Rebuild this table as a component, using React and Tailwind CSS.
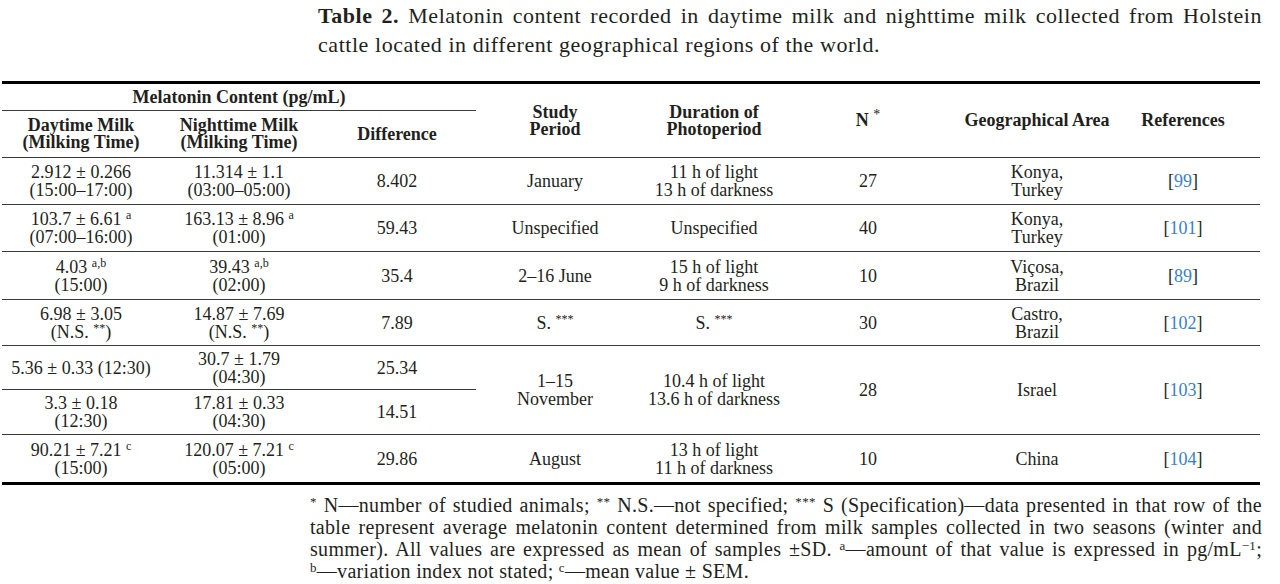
import React from 'react';
import clsx from 'clsx';

const rule = 'border-b border-[#3a3a3a]';

function Cell({ children, className, last }) {
    return (
        <div className={clsx('flex flex-col items-center justify-center text-center', !last && rule, className)}>
            {children}
        </div>
    );
}

function Head({ children, className }) {
    return (
        <Cell className={clsx('font-bold text-[18px] leading-[17px]', className)}>
            {children}
        </Cell>
    );
}

function Ref({ n, last, className }) {
    return (
        <Cell last={last} className={clsx('pr-[26px]', className)}>
            <span>[<span className="text-[#3b7fc4]">{n}</span>]</span>
        </Cell>
    );
}

const Sup = ({ children, className }) => <sup className={clsx('text-[12px] leading-none', className)}>{children}</sup>;

const rows = [
    {
        day: ['2.912 ± 0.266', '(15:00–17:00)'],
        night: ['11.314 ± 1.1', '(03:00–05:00)'],
        diff: '8.402', period: ['January'], photo: ['11 h of light', '13 h of darkness'],
        n: '27', area: ['Konya,', 'Turkey'], ref: '99',
    },
    {
        day: [<>103.7 ± 6.61 <Sup>a</Sup></>, '(07:00–16:00)'],
        night: [<>163.13 ± 8.96 <Sup>a</Sup></>, '(01:00)'],
        diff: '59.43', period: ['Unspecified'], photo: ['Unspecified'],
        n: '40', area: ['Konya,', 'Turkey'], ref: '101',
    },
    {
        day: [<>4.03 <Sup>a,b</Sup></>, '(15:00)'],
        night: [<>39.43 <Sup>a,b</Sup></>, '(02:00)'],
        diff: '35.4', period: ['2–16 June'], photo: ['15 h of light', '9 h of darkness'],
        n: '10', area: ['Viçosa,', 'Brazil'], ref: '89',
    },
    {
        day: ['6.98 ± 3.05', <>(N.S. <Sup>**</Sup>)</>],
        night: ['14.87 ± 7.69', <>(N.S. <Sup>**</Sup>)</>],
        diff: '7.89', period: [<>S. <Sup>***</Sup></>], photo: [<>S. <Sup>***</Sup></>],
        n: '30', area: ['Castro,', 'Brazil'], ref: '102',
    },
];

const lines = (arr) => arr.map((l, i) => <span key={i} className="block">{l}</span>);

export default function App() {
    return (
        <div className="w-[1280px] h-[584px] overflow-hidden bg-white text-[#231f20] font-['Liberation_Serif',serif]">
            {/* Caption */}
            <div className="pl-[318px] pr-[18px] pt-[1px] text-[22px] leading-[29px] tracking-[0.55px]">
                <p className="text-justify [text-align-last:justify]">
                    <b>Table 2.</b> Melatonin content recorded in daytime milk and nighttime milk collected from Holstein
                </p>
                <p>cattle located in different geographical regions of the world.</p>
            </div>

            {/* Table */}
            <div className="ml-[2px] mt-[22px] w-[1258px] border-y-[3px] border-black">
                <div className="grid grid-cols-[158px_158px_158px_158px_160px_148px_190px_128px] grid-rows-[27px_47px_47px_47px_48px_46px_44px_45px_47px] text-[18px] leading-[18px]">
                    <Head className="col-span-3 pt-[1px]">Melatonin Content (pg/mL)</Head>
                    <Head className="row-span-2">Study<br />Period</Head>
                    <Head className="row-span-2">Duration of<br />Photoperiod</Head>
                    <Head className="row-span-2">
                        <span>N <Sup className="text-[14px] font-normal">*</Sup></span>
                    </Head>
                    <Head className="row-span-2">Geographical Area</Head>
                    <Head className="row-span-2 pr-[26px]">References</Head>

                    <Head>Daytime Milk<br />(Milking Time)</Head>
                    <Head>Nighttime Milk<br />(Milking Time)</Head>
                    <Head>Difference</Head>

                    {rows.map((r, i) => (
                        <React.Fragment key={i}>
                            <Cell>{lines(r.day)}</Cell>
                            <Cell>{lines(r.night)}</Cell>
                            <Cell>{r.diff}</Cell>
                            <Cell>{lines(r.period)}</Cell>
                            <Cell>{lines(r.photo)}</Cell>
                            <Cell>{r.n}</Cell>
                            <Cell>{lines(r.area)}</Cell>
                            <Ref n={r.ref} />
                        </React.Fragment>
                    ))}

                    {/* Israel rows */}
                    <Cell>5.36 ± 0.33 (12:30)</Cell>
                    <Cell>{lines(['30.7 ± 1.79', '(04:30)'])}</Cell>
                    <Cell>25.34</Cell>
                    <Cell className="row-span-2">{lines(['1–15', 'November'])}</Cell>
                    <Cell className="row-span-2">{lines(['10.4 h of light', '13.6 h of darkness'])}</Cell>
                    <Cell className="row-span-2">28</Cell>
                    <Cell className="row-span-2">Israel</Cell>
                    <Ref n="103" className="row-span-2" />
                    <Cell>{lines(['3.3 ± 0.18', '(12:30)'])}</Cell>
                    <Cell>{lines(['17.81 ± 0.33', '(04:30)'])}</Cell>
                    <Cell>14.51</Cell>

                    {/* China */}
                    <Cell last>{lines([<>90.21 ± 7.21 <Sup>c</Sup></>, '(15:00)'])}</Cell>
                    <Cell last>{lines([<>120.07 ± 7.21 <Sup>c</Sup></>, '(05:00)'])}</Cell>
                    <Cell last>29.86</Cell>
                    <Cell last>August</Cell>
                    <Cell last>{lines(['13 h of light', '11 h of darkness'])}</Cell>
                    <Cell last>10</Cell>
                    <Cell last>China</Cell>
                    <Ref n="104" last />
                </div>
            </div>

            {/* Footnote */}
            <div className="ml-[310px] mt-[9px] w-[952px] text-[20px] leading-[22px] tracking-[0.3px]">
                <p className="text-justify [text-align-last:justify]">
                    <Sup className="text-[13px]">*</Sup> N—number of studied animals; <Sup className="text-[13px]">**</Sup> N.S.—not specified; <Sup className="text-[13px]">***</Sup> S (Specification)—data presented in that row of the
                </p>
                <p className="text-justify [text-align-last:justify]">
                    table represent average melatonin content determined from milk samples collected in two seasons (winter and
                </p>
                <p className="text-justify [text-align-last:justify]">
                    summer). All values are expressed as mean of samples ±SD. <Sup className="text-[13px]">a</Sup>—amount of that value is expressed in pg/mL<Sup className="text-[13px]">−1</Sup>;
                </p>
                <p>
                    <Sup className="text-[13px]">b</Sup>—variation index not stated; <Sup className="text-[13px]">c</Sup>—mean value ± SEM.
                </p>
            </div>
        </div>
    );
}
